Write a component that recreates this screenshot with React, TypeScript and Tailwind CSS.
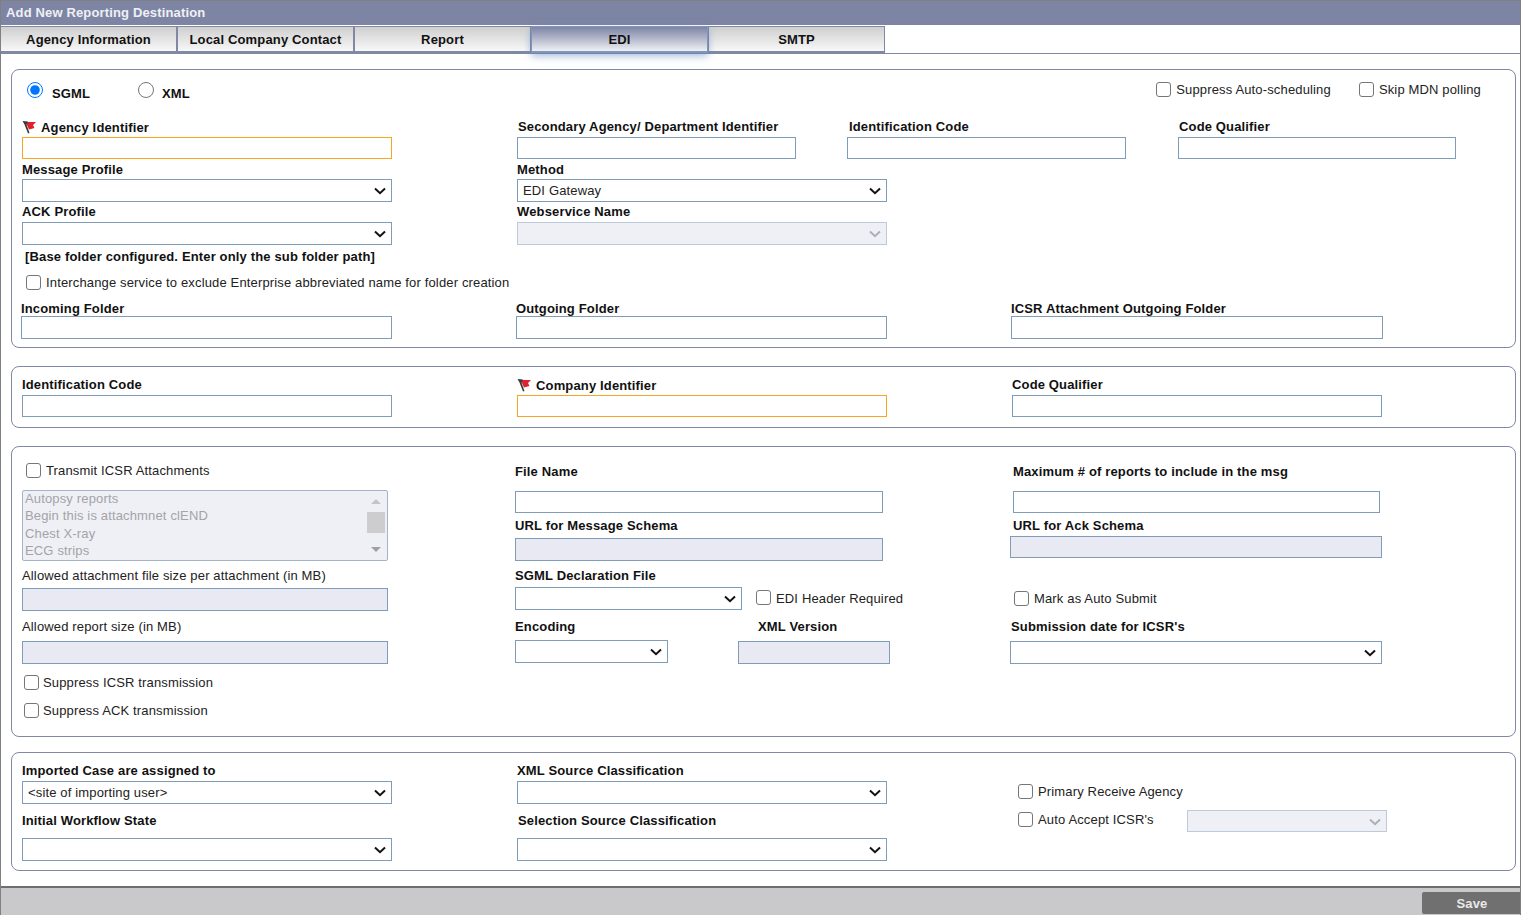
import type { ReactNode } from 'react'

const label = 'block translate-y-px text-[13px] leading-[16px] font-bold text-[#111] tracking-[0.15px]'
const plain = 'translate-y-px text-[13px] leading-[16px] text-[#222] tracking-[0.15px]'
const box = 'block border border-[#7f9db9] bg-white'
const disabledBox = 'block border border-[#7f9db9] bg-[#e8e9f2]'

function Flag() {
  return (
    <svg width="14" height="14" viewBox="0 0 14 14" className="shrink-0">
      <path d="M3 2 L14 2 L11 5 L12.5 8 L7 9.5 L5 5Z" fill="#e0202e" />
      <path d="M0.5 1 L6 1.5 L4.5 4.5 L7.5 13 L6 13.5 L2.5 4.5Z" fill="#3a3a3a" />
    </svg>
  )
}

function Label({ children, flag, className = '' }: { children: ReactNode; flag?: boolean; className?: string }) {
  return (
    <div className={`flex items-center gap-[5px] ${className}`}>
      {flag && <Flag />}
      <span className={label}>{children}</span>
    </div>
  )
}

function Check({ text, className = '' }: { text: string; className?: string }) {
  return (
    <label className={`flex items-center ${className}`}>
      <input type="checkbox" className="appearance-none w-[15px] h-[15px] m-0 mr-[5px] shrink-0 bg-white border-[1.5px] border-[#767676] rounded-[3px]" />
      <span className={`${plain} whitespace-nowrap`}>{text}</span>
    </label>
  )
}

function Select({ className = '', value, disabled }: { className?: string; value?: string; disabled?: boolean }) {
  return (
    <div className={`relative ${className}`}>
      <select
        disabled={disabled}
        defaultValue={value ?? ''}
        className={`block w-full h-full appearance-none border pl-[5px] text-[13px] tracking-[0.15px] text-[#222] ${
          disabled ? 'bg-[#eff0f5] border-[#bccbdc]' : 'bg-white border-[#7f9db9]'
        }`}
      >
        <option value={value ?? ''}>{value ?? ''}</option>
      </select>
      <svg width="12" height="8" viewBox="0 0 12 8" className="absolute right-[6px] top-[8px] pointer-events-none">
        <path d="M1 1.5 L6 6.2 L11 1.5" fill="none" stroke={disabled ? '#a9b0bc' : '#111'} strokeWidth="2" />
      </svg>
    </div>
  )
}

function Panel({ className, children }: { className: string; children: ReactNode }) {
  return <section className={`border border-[#8088a4] rounded-[8px] ml-[10px] mr-[4px] ${className}`}>{children}</section>
}

export default function App() {
  const tabs = ['Agency Information', 'Local Company Contact', 'Report', 'EDI', 'SMTP']

  return (
    <div className="h-[915px] flex flex-col bg-white font-['Liberation_Sans',Arial,sans-serif] border-x border-[#808080] overflow-hidden">
      <div className="h-[25px] shrink-0 bg-[#7e85a4] border-t border-[#808080] pl-[5px] text-[13px] tracking-[0.15px] leading-[23px] font-bold text-[#eef0f6]">
        Add New Reporting Destination
      </div>

      <div className="flex h-[28px] mt-px shrink-0 border-b border-[#8088a4]">
        {tabs.map((t, i) =>
          t === 'EDI' ? (
            <div key={t} className="w-[177px] border border-[#7f96b9] border-b-[2px] bg-gradient-to-b from-[#7e85a4] to-[#f0f0f4] shadow-[0_3px_8px_rgba(90,130,190,0.55)] z-10 text-center text-[13px] tracking-[0.15px] leading-[25px] font-bold text-[#111]">
              {t}
            </div>
          ) : (
            <div key={t} className={`w-[177px] border border-[#8088a4] border-b-[2px] bg-gradient-to-b from-[#cfcfcf] to-[#f8f8f8] text-center text-[13px] tracking-[0.15px] leading-[25px] font-bold text-[#111] ${i === 0 ? '-ml-px' : ''}`}>
              {t}
            </div>
          ),
        )}
      </div>

      {/* Agency / folders */}
      <Panel className="mt-[15px] h-[279px] shrink-0 pl-[10px]">
        <div className="flex h-[47px] items-start pt-[12px]">
          <label className="flex items-start w-[116px] pl-[5px]">
            <input type="radio" name="fmt" defaultChecked className="w-[16px] h-[16px] m-0" />
            <span className="ml-[9px] mt-[4px] text-[13px] leading-[16px] tracking-[0.15px] font-bold text-[#111]">SGML</span>
          </label>
          <label className="flex items-start">
            <input type="radio" name="fmt" className="w-[16px] h-[16px] m-0" />
            <span className="ml-[8px] mt-[4px] text-[13px] leading-[16px] tracking-[0.15px] font-bold text-[#111]">XML</span>
          </label>
          <Check text="Suppress Auto-scheduling" className="ml-auto -mt-px" />
          <Check text="Skip MDN polling" className="ml-[28px] mr-[34px] -mt-px" />
        </div>

        <div className="flex">
          <div className="w-[495px] shrink-0">
            <Label flag className="h-[20px]">Agency Identifier</Label>
            <input className="block w-[370px] h-[22px] border border-[#f5a623] bg-white" />
            <Label className="mt-px h-[18px]">Message Profile</Label>
            <Select className="w-[370px] h-[23px] mt-px" />
            <Label className="h-[17px]">ACK Profile</Label>
            <Select className="w-[370px] h-[23px] mt-[3px]" />
            <div className={`${label} ml-[3px] mt-[3px]`}>[Base folder configured. Enter only the sub folder path]</div>
            <Check text="Interchange service to exclude Enterprise abbreviated name for folder creation" className="ml-[4px] mt-[10px]" />
          </div>
          <div className="flex-1">
            <div className="flex">
              <div className="w-[330px]">
                <Label className="h-[17px] ml-px">Secondary Agency/ Department Identifier</Label>
                <input className={`${box} w-[279px] h-[22px] mt-[3px]`} />
              </div>
              <div className="w-[331px]">
                <Label className="h-[17px] ml-[2px]">Identification Code</Label>
                <input className={`${box} w-[279px] h-[22px] mt-[3px]`} />
              </div>
              <div>
                <Label className="h-[17px] ml-px">Code Qualifier</Label>
                <input className={`${box} w-[278px] h-[22px] mt-[3px]`} />
              </div>
            </div>
            <Label className="mt-px h-[17px]">Method</Label>
            <Select className="w-[370px] h-[23px] mt-[2px]" value="EDI Gateway" />
            <Label className="h-[17px]">Webservice Name</Label>
            <Select className="w-[370px] h-[23px] mt-[3px]" disabled />
          </div>
        </div>

        <div className="flex mt-[9px] -ml-px">
          <div className="w-[495px] shrink-0">
            <Label className="h-[17px]">Incoming Folder</Label>
            <input className={`${box} w-[371px] h-[23px]`} />
          </div>
          <div className="w-[495px] shrink-0">
            <Label className="h-[17px]">Outgoing Folder</Label>
            <input className={`${box} w-[371px] h-[23px]`} />
          </div>
          <div>
            <Label className="h-[17px]">ICSR Attachment Outgoing Folder</Label>
            <input className={`${box} w-[372px] h-[23px]`} />
          </div>
        </div>
      </Panel>

      {/* Company */}
      <Panel className="mt-[18px] h-[62px] shrink-0 pl-[10px] pt-[7px] flex">
        <div className="w-[495px] shrink-0">
          <Label className="h-[19px]">Identification Code</Label>
          <input className={`${box} w-[370px] h-[22px] mt-[2px]`} />
        </div>
        <div className="w-[495px] shrink-0">
          <Label flag className="h-[21px] pt-px">Company Identifier</Label>
          <input className="block w-[370px] h-[22px] border border-[#f5a623] bg-white" />
        </div>
        <div>
          <Label className="h-[19px]">Code Qualifier</Label>
          <input className={`${box} w-[370px] h-[22px] mt-[2px]`} />
        </div>
      </Panel>

      {/* Attachments */}
      <Panel className="mt-[18px] h-[291px] shrink-0 pl-[10px] pt-[15px] flex">
        <div className="w-[493px] shrink-0">
          <Check text="Transmit ICSR Attachments" className="ml-[4px]" />
          <div className="mt-[12px] w-[366px] h-[71px] border border-[#a3b3c9] rounded-[2px] bg-[#eff0f5] flex overflow-hidden">
            <div className="flex-1 pl-[2px] -mt-px text-[13px] tracking-[0.15px] leading-[17.4px] text-[#a3a3a8]">
              <div>Autopsy reports</div>
              <div>Begin this is attachmnet clEND</div>
              <div>Chest X-ray</div>
              <div>ECG strips</div>
            </div>
            <div className="w-[20px] flex flex-col items-center pt-[8px] pb-[8px] pr-[2px]">
              <div className="border-x-[5px] border-x-transparent border-b-[5px] border-b-[#c4c4c8]" />
              <div className="w-full h-[21px] mt-[8px] bg-[#cdcdcf]" />
              <div className="mt-auto border-x-[5px] border-x-transparent border-t-[5px] border-t-[#a0a0a4]" />
            </div>
          </div>
          <div className={`${plain} mt-[6px]`}>Allowed attachment file size per attachment (in MB)</div>
          <input disabled className={`${disabledBox} w-[366px] h-[23px] mt-[5px]`} />
          <div className={`${plain} mt-[7px]`}>Allowed report size (in MB)</div>
          <input disabled className={`${disabledBox} w-[366px] h-[23px] mt-[7px]`} />
          <Check text="Suppress ICSR transmission" className="ml-[2px] [&>input]:mr-[4px] -mr-px mt-[10px]" />
          <Check text="Suppress ACK transmission" className="ml-[2px] [&>input]:mr-[4px] -mr-px mt-[12px]" />
        </div>
        <div className="w-[498px] shrink-0">
          <Label className="h-[17px]">File Name</Label>
          <input className={`${box} w-[368px] h-[22px] mt-[12px]`} />
          <Label className="h-[19px] mt-[2px]">URL for Message Schema</Label>
          <input disabled className={`${disabledBox} w-[368px] h-[23px] mt-[4px]`} />
          <Label className="h-[19px] mt-[4px]">SGML Declaration File</Label>
          <div className="flex items-center mt-[3px]">
            <Select className="w-[227px] h-[23px]" />
            <Check text="EDI Header Required" className="ml-[14px] -mt-[2px]" />
          </div>
          <div className="flex mt-[7px]">
            <div className="w-[223px]">
              <Label className="h-[17px]">Encoding</Label>
              <Select className="w-[153px] h-[23px] mt-[6px]" />
            </div>
            <div>
              <Label className="h-[17px] ml-[20px]">XML Version</Label>
              <input disabled className={`${disabledBox} w-[152px] h-[23px] mt-[7px]`} />
            </div>
          </div>
        </div>
        <div>
          <Label className="h-[17px]">Maximum # of reports to include in the msg</Label>
          <input className={`${box} w-[367px] h-[22px] mt-[12px]`} />
          <Label className="h-[19px] mt-[2px]">URL for Ack Schema</Label>
          <input disabled className={`${disabledBox} w-[372px] h-[22px] mt-[2px] -ml-[3px]`} />
          <Check text="Mark as Auto Submit" className="mt-[32px] ml-px" />
          <Label className="h-[17px] mt-[11px] -ml-[2px]">Submission date for ICSR's</Label>
          <Select className="w-[372px] h-[23px] mt-[7px] -ml-[3px]" />
        </div>
      </Panel>

      {/* Workflow */}
      <Panel className="mt-[15px] h-[119px] shrink-0 pl-[10px] pt-[8px] flex">
        <div className="w-[495px] shrink-0">
          <Label className="h-[18px]">Imported Case are assigned to</Label>
          <Select className="w-[370px] h-[23px] mt-[2px]" value="<site of importing user>" />
          <Label className="h-[19px] mt-[6px]">Initial Workflow State</Label>
          <Select className="w-[370px] h-[23px] mt-[9px]" />
        </div>
        <div className="w-[500px] shrink-0">
          <Label className="h-[18px]">XML Source Classification</Label>
          <Select className="w-[370px] h-[23px] mt-[2px]" />
          <Label className="h-[19px] mt-[6px] ml-px">Selection Source Classification</Label>
          <Select className="w-[370px] h-[23px] mt-[9px]" />
        </div>
        <div className="pt-[22px] pl-px">
          <Check text="Primary Receive Agency" />
          <div className="flex items-start mt-[12px]">
            <Check text="Auto Accept ICSR's" className="w-[169px]" />
            <Select disabled className="w-[200px] h-[22px] -mt-px" />
          </div>
        </div>
      </Panel>

      <footer className="mt-auto h-[29px] shrink-0 border-t-2 border-[#6e6e6e] bg-[#c9c9cb] flex justify-end items-start pt-[4px]">
        <button className="w-[98px] h-[22px] rounded-l-[2px] bg-[#707070] text-[13px] tracking-[0.15px] font-bold text-[#e8e8e8] leading-[23px] pl-[2px]">Save</button>
      </footer>
    </div>
  )
}
